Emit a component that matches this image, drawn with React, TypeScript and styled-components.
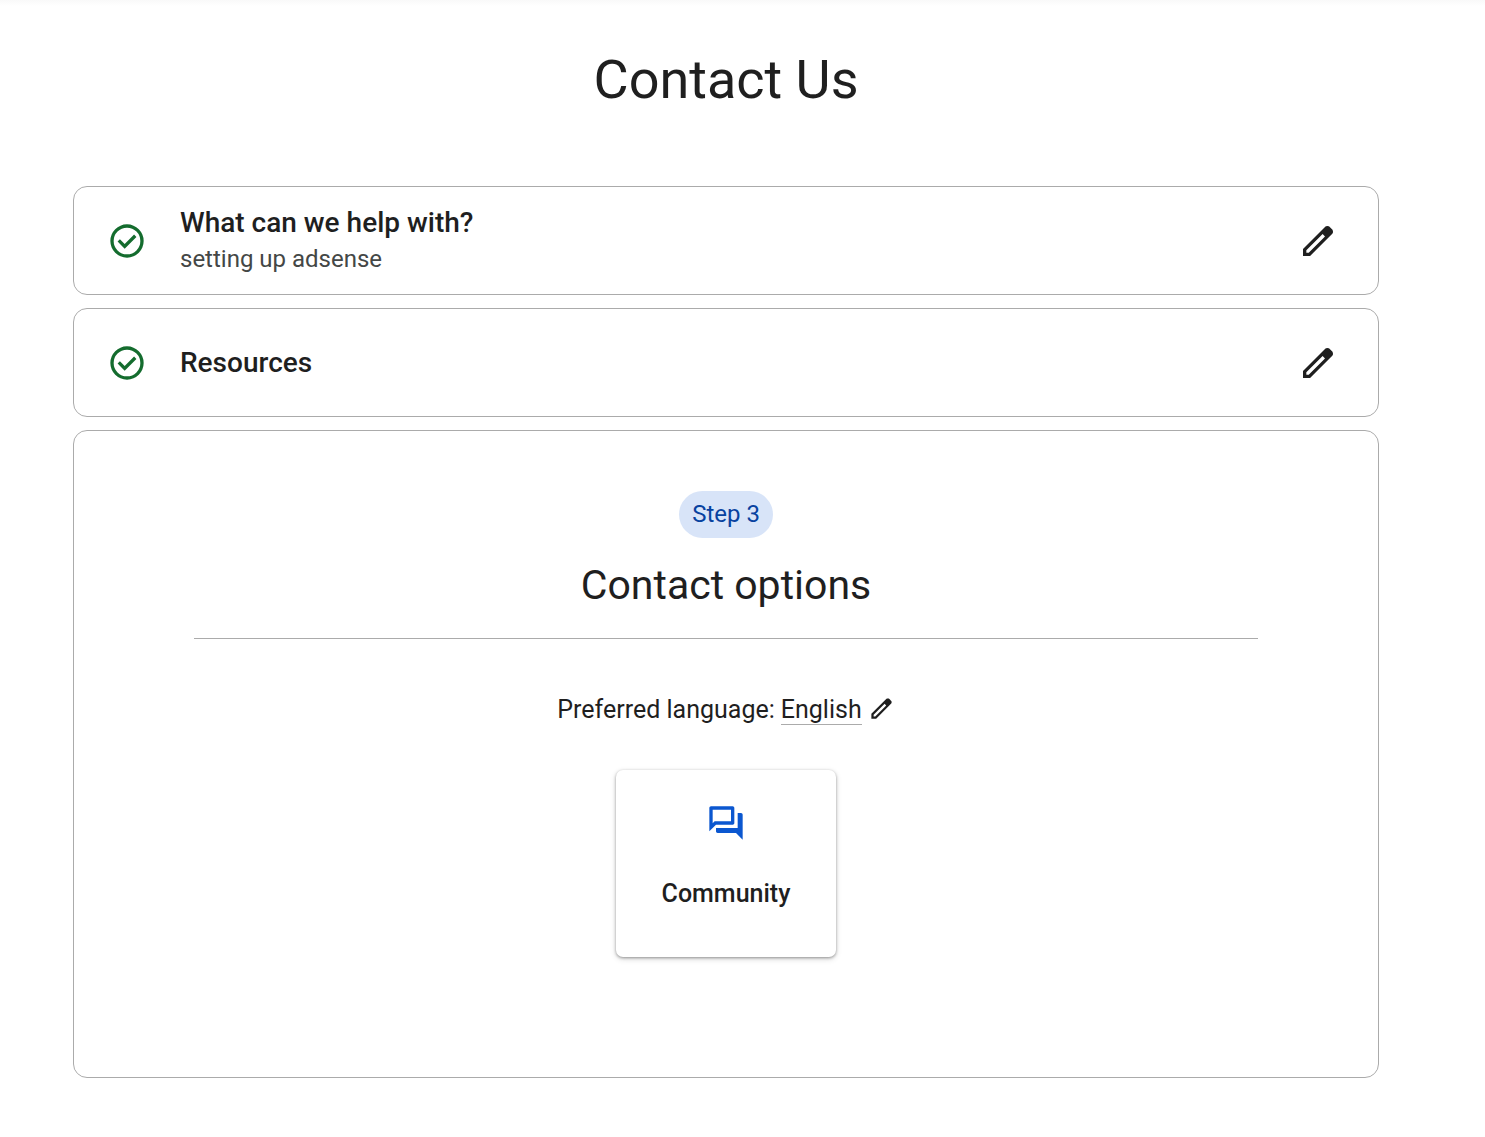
import React from "react";
import styled, { createGlobalStyle } from "styled-components";

const GlobalStyle = createGlobalStyle`
  *, *::before, *::after { box-sizing: border-box; }
  body {
    margin: 0;
    background: #fff;
    color: #1f1f1f;
    font-family: Roboto, "Noto Sans", sans-serif;
  }
  h1, h2, h3, p { margin: 0; }
  button { font: inherit; color: inherit; background: none; border: 0; padding: 0; cursor: pointer; }
`;

const Page = styled.main`
  padding: 48px 106px 56px 73px;
  background: linear-gradient(#f9f9f9, #fff 6px);
`;

const PageTitle = styled.h1`
  margin-bottom: 74px;
  font-size: 54px;
  font-weight: 400;
  line-height: 64px;
  text-align: center;
`;

const Steps = styled.div`
  display: flex;
  flex-direction: column;
  gap: 13px;
`;

const Panel = styled.section`
  border: 1px solid #ababab;
  border-radius: 14px;
  background: #fff;
`;

const DonePanel = styled(Panel)`
  display: flex;
  align-items: center;
  gap: 33px;
  min-height: 109px;
  padding: 17px 40px 16px 33px;
`;

const StepText = styled.div`
  flex: 1;
  min-width: 0;
`;

const StepTitle = styled.h2`
  font-size: 28px;
  font-weight: 500;
  line-height: 36px;
`;

const StepAnswer = styled.p`
  color: #444746;
  font-size: 24px;
  line-height: 36px;
`;

const IconButton = styled.button`
  display: flex;
`;

const Icon = styled.svg<{ $size: number; $color?: string }>`
  display: block;
  flex: none;
  width: ${(p) => p.$size}px;
  height: ${(p) => p.$size}px;
  fill: ${(p) => p.$color ?? "#1f1f1f"};
`;

const CurrentPanel = styled(Panel)`
  display: flex;
  flex-direction: column;
  align-items: center;
  padding: 60px 120px 120px;
`;

const StepBadge = styled.span`
  padding: 0 13px;
  border-radius: 24px;
  background: #d8e4f8;
  color: #0842a0;
  font-size: 24px;
  line-height: 47px;
`;

const CurrentTitle = styled.h2`
  align-self: stretch;
  margin-bottom: 56px;
  padding: 20px 0 26px;
  border-bottom: 1px solid #ababab;
  font-size: 41px;
  font-weight: 400;
  line-height: 54px;
  text-align: center;
`;

const LanguageRow = styled.div`
  display: flex;
  align-items: flex-start;
  gap: 6px;
  margin-bottom: 45px;
  font-size: 25px;
  line-height: 29px;
`;

const LanguageButton = styled.button`
  display: flex;
  align-items: flex-start;
  gap: 6px;
`;

const LanguageName = styled.span`
  border-bottom: 1px solid #ababab;
`;

const OptionCard = styled.button`
  display: flex;
  flex-direction: column;
  align-items: center;
  gap: 34px;
  width: 220px;
  padding: 33px 16px 46px;
  border-radius: 7px;
  background: #fff;
  box-shadow: 0 1px 3px rgba(0, 0, 0, 0.36), 0 2px 6px rgba(0, 0, 0, 0.14);
  font-size: 25px;
  font-weight: 500;
  line-height: 34px;
`;

const CheckIcon = () => (
  <Icon $size={40} $color="#146c2e" viewBox="0 0 24 24" role="img" aria-label="Completed">
    <path d="m10.6 16.6 7.05-7.05-1.4-1.4-5.65 5.65-2.85-2.85-1.4 1.4zM12 22q-2.075 0-3.9-.788a10.1 10.1 0 0 1-3.175-2.137q-1.35-1.35-2.137-3.175A9.7 9.7 0 0 1 2 12q0-2.075.788-3.9a10.1 10.1 0 0 1 2.137-3.175q1.35-1.35 3.175-2.137A9.7 9.7 0 0 1 12 2q2.075 0 3.9.788a10.1 10.1 0 0 1 3.175 2.137q1.35 1.35 2.137 3.175A9.7 9.7 0 0 1 22 12q0 2.075-.788 3.9a10.1 10.1 0 0 1-2.137 3.175q-1.35 1.35-3.175 2.137A9.7 9.7 0 0 1 12 22m0-2q3.35 0 5.675-2.325T20 12t-2.325-5.675T12 4 6.325 6.325 4 12t2.325 5.675T12 20" />
  </Icon>
);

const PencilIcon = ({ size }: { size: number }) => (
  <Icon $size={size} viewBox="0 0 24 24" aria-hidden="true">
    <path d="M5 19h1.425L16.2 9.225 14.775 7.8 5 17.575zm-2 2v-4.25L16.2 3.575q.3-.275.663-.425t.762-.15.775.15.65.45L20.425 5q.3.275.438.65T21 6.4q0 .4-.137.763t-.438.662L7.25 21z" />
  </Icon>
);

const ForumIcon = () => (
  <Icon $size={40} $color="#0b57d0" viewBox="0 0 24 24" aria-hidden="true">
    <path d="M15 4v7H5.17L4 12.17V4zm1-2H3c-.55 0-1 .45-1 1v14l4-4h10c.55 0 1-.45 1-1V3c0-.55-.45-1-1-1m5 4h-2v9H6v2c0 .55.45 1 1 1h11l4 4V7c0-.55-.45-1-1-1" />
  </Icon>
);

const CompletedStep = ({ title, answer }: { title: string; answer?: string }) => (
  <DonePanel>
    <CheckIcon />
    <StepText>
      <StepTitle>{title}</StepTitle>
      {answer && <StepAnswer>{answer}</StepAnswer>}
    </StepText>
    <IconButton type="button" aria-label={`Edit ${title}`}>
      <PencilIcon size={40} />
    </IconButton>
  </DonePanel>
);

export default function App() {
  return (
    <>
      <GlobalStyle />
      <Page>
        <PageTitle>Contact Us</PageTitle>
        <Steps>
          <CompletedStep title="What can we help with?" answer="setting up adsense" />
          <CompletedStep title="Resources" />
          <CurrentPanel>
            <StepBadge>Step 3</StepBadge>
            <CurrentTitle>Contact options</CurrentTitle>
            <LanguageRow>
              <span>Preferred language:</span>
              <LanguageButton type="button" aria-label="English, change language">
                <LanguageName>English</LanguageName>
                <PencilIcon size={27} />
              </LanguageButton>
            </LanguageRow>
            <OptionCard type="button">
              <ForumIcon />
              <span>Community</span>
            </OptionCard>
          </CurrentPanel>
        </Steps>
      </Page>
    </>
  );
}
